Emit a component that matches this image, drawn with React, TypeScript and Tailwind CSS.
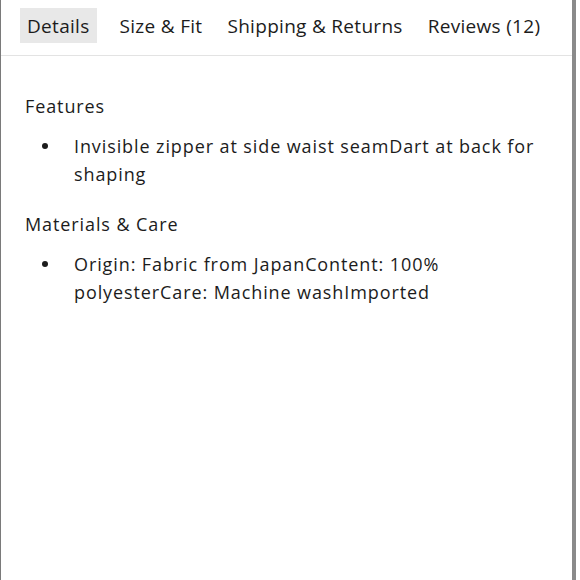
import { useState } from "react";

const tabs = ["Details", "Size & Fit", "Shipping & Returns", "Reviews (12)"];

const sections = [
  {
    title: "Features",
    items: ["Invisible zipper at side waist seamDart at back for shaping"],
  },
  {
    title: "Materials & Care",
    items: ["Origin: Fabric from JapanContent: 100% polyesterCare: Machine washImported"],
  },
];

export default function App() {
  const [active, setActive] = useState("Details");

  return (
    <div className="h-[580px] w-[576px] border-l border-l-[#7a7a7a] border-r-4 border-r-[#8a8a8a] bg-white font-['Open_Sans',sans-serif] text-[#1c1c1c]">
      <div className="flex items-center gap-[11px] border-b border-[#e3e3e3] px-[19px] pt-[8px] pb-[12px]">
        {tabs.map((tab) => (
          <button
            key={tab}
            onClick={() => setActive(tab)}
            className={
              "h-[35px] shrink-0 whitespace-nowrap px-[7px] pt-[1px] text-[19px] leading-none tracking-[0.3px] first:mr-[5px] " +
              (active === tab ? "bg-[#e8e8e8]" : "bg-transparent")
            }
          >
            {tab}
          </button>
        ))}
      </div>

      <div className="px-6 pt-[36px] tracking-[0.9px]">
        {sections.map((section) => (
          <div key={section.title} className="mb-[22px]">
            <h3 className="text-[18px] leading-[28px]">{section.title}</h3>
            <ul className="mt-[12px]">
              {section.items.map((item) => (
                <li key={item} className="flex text-[18px] leading-[28px]">
                  <span className="flex h-[28px] w-[49px] shrink-0 items-center pl-[17px]">
                    <span className="h-[6px] w-[6px] rounded-full bg-[#1c1c1c]" />
                  </span>
                  <span>{item}</span>
                </li>
              ))}
            </ul>
          </div>
        ))}
      </div>
    </div>
  );
}
